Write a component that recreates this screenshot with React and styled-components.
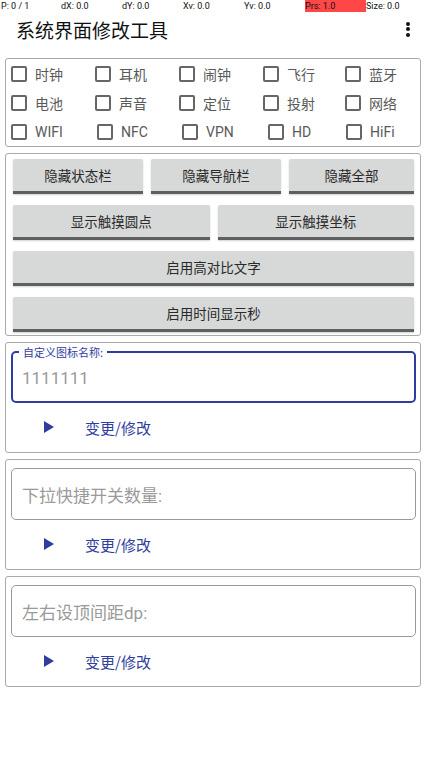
import React from 'react';
import styled, { createGlobalStyle } from 'styled-components';

const GlobalStyle = createGlobalStyle`
  body {
    margin: 0;
    background: #fff;
    font-family: Roboto, 'Noto Sans CJK SC', sans-serif;
  }
`;

const BLUE = '#2f3e9e';

const Page = styled.div`
  width: 427px;
  height: 760px;
  background: #fff;
  overflow: hidden;
`;

const StatusBar = styled.div`
  display: grid;
  grid-template-columns: repeat(7, 61px);
  height: 12px;
`;

const StatusCell = styled.div`
  font-size: 9px;
  line-height: 12px;
  color: #111;
  padding-left: ${({ first }) => (first ? '1px' : '0')};
  background: ${({ hot }) => (hot ? '#ff4747' : 'transparent')};
  white-space: nowrap;
`;

const Header = styled.div`
  display: flex;
  align-items: center;
  justify-content: space-between;
  height: 34px;
  padding: 0 17px 0 16px;
  margin-bottom: 12px;
`;

const Title = styled.h1`
  margin: 0;
  font-size: 19px;
  font-weight: 400;
  color: #111;
  font-family: 'Noto Sans CJK SC', sans-serif;
`;

const MenuDots = styled.div`
  display: flex;
  flex-direction: column;
  gap: 1.5px;
  span {
    width: 4px;
    height: 4px;
    border-radius: 50%;
    background: #111;
  }
`;

const Stack = styled.div`
  display: flex;
  flex-direction: column;
  gap: 6px;
  padding: 0 6px 0 5px;
`;

const Panel = styled.div`
  border: 1px solid #aaa;
  border-radius: 3px;
  padding: ${({ pad }) => pad || '0'};
`;

const CheckRow = styled.div`
  display: grid;
  grid-template-columns: ${({ cols }) => cols};
  height: 29px;
  align-items: center;
  padding-left: 5px;
`;

const CheckItem = styled.label`
  display: flex;
  align-items: center;
  gap: 8px;
  font-size: 14px;
  color: #595959;
  font-family: Roboto, 'Noto Sans CJK SC', sans-serif;
`;

const Box = styled.span`
  width: 12px;
  height: 12px;
  border: 2px solid #666;
  border-radius: 2px;
  flex: none;
`;

const ButtonGrid = styled.div`
  display: flex;
  flex-direction: column;
  gap: 11px;
  padding: 5px 6px 3px 7px;
`;

const ButtonRow = styled.div`
  display: grid;
  grid-template-columns: ${({ cols }) => cols};
  gap: 8px;
`;

const GrayButton = styled.button`
  height: 35px;
  border: none;
  border-bottom: 3px solid #5f5f5f;
  border-radius: 2px 2px 0 0;
  background: #d7d8d8;
  box-shadow: 0 1px 2px rgba(0, 0, 0, 0.18);
  font-family: 'Noto Sans CJK SC', sans-serif;
  font-size: 13.5px;
  color: #2a2a2a;
  padding: 0;
`;

const Field = styled.div`
  position: relative;
  height: 52px;
  box-sizing: border-box;
  margin: 0 4px 0 5px;
  border: ${({ focused }) => (focused ? `2px solid ${BLUE}` : '1px solid #999')};
  border-radius: 5px;
  display: flex;
  align-items: center;
  padding-left: ${({ focused }) => (focused ? '9px' : '10px')};
`;

const FieldLabel = styled.span`
  position: absolute;
  top: -8px;
  left: 6px;
  padding: 0 4px;
  background: #fff;
  font-size: 11px;
  line-height: 14px;
  color: ${BLUE};
  font-family: 'Noto Sans CJK SC', sans-serif;
`;

const FieldText = styled.span`
  font-size: 17px;
  color: #9a9a9a;
  font-family: Roboto, 'Noto Sans CJK SC', sans-serif;
  margin-top: ${({ focused }) => (focused ? '2px' : '0')};
`;

const ActionRow = styled.div`
  height: 48px;
  display: flex;
  align-items: center;
  padding-left: 38px;
  gap: 31px;
  color: ${BLUE};
  font-size: 15px;
  font-family: 'Noto Sans CJK SC', sans-serif;
`;

const checks = [
  { cols: '84px 84px 84px 82px 1fr', items: ['时钟', '耳机', '闹钟', '飞行', '蓝牙'] },
  { cols: '84px 84px 84px 82px 1fr', items: ['电池', '声音', '定位', '投射', '网络'] },
  { cols: '86px 85px 86px 78px 1fr', items: ['WIFI', 'NFC', 'VPN', 'HD', 'HiFi'] },
];

const stats = ['P: 0 / 1', 'dX: 0.0', 'dY: 0.0', 'Xv: 0.0', 'Yv: 0.0', 'Prs: 1.0', 'Size: 0.0'];

const fields = [
  { label: '自定义图标名称:', text: '1111111', focused: true },
  { text: '下拉快捷开关数量:' },
  { text: '左右设顶间距dp:' },
];

const Play = () => (
  <svg width="10" height="12" viewBox="0 0 10 12">
    <path d="M0 0 L10 6 L0 12 Z" fill={BLUE} />
  </svg>
);

export default function App() {
  return (
    <Page>
      <GlobalStyle />
      <StatusBar>
        {stats.map((s, i) => (
          <StatusCell key={s} first={i === 0} hot={i === 5}>{s}</StatusCell>
        ))}
      </StatusBar>
      <Header>
        <Title>系统界面修改工具</Title>
        <MenuDots><span /><span /><span /></MenuDots>
      </Header>
      <Stack>
        <Panel>
          {checks.map((row, r) => (
            <CheckRow key={r} cols={row.cols}>
              {row.items.map((c) => (
                <CheckItem key={c}><Box />{c}</CheckItem>
              ))}
            </CheckRow>
          ))}
        </Panel>
        <Panel>
          <ButtonGrid>
            <ButtonRow cols="130fr 130fr 125fr">
              <GrayButton>隐藏状态栏</GrayButton>
              <GrayButton>隐藏导航栏</GrayButton>
              <GrayButton>隐藏全部</GrayButton>
            </ButtonRow>
            <ButtonRow cols="1fr 1fr">
              <GrayButton>显示触摸圆点</GrayButton>
              <GrayButton>显示触摸坐标</GrayButton>
            </ButtonRow>
            <ButtonRow cols="1fr">
              <GrayButton>启用高对比文字</GrayButton>
            </ButtonRow>
            <ButtonRow cols="1fr">
              <GrayButton>启用时间显示秒</GrayButton>
            </ButtonRow>
          </ButtonGrid>
        </Panel>
        {fields.map((f) => (
          <Panel key={f.text} pad="8px 0 1px 0">
            <Field focused={f.focused}>
              {f.label && <FieldLabel>{f.label}</FieldLabel>}
              <FieldText focused={f.focused}>{f.text}</FieldText>
            </Field>
            <ActionRow>
              <Play />
              <span>变更/修改</span>
            </ActionRow>
          </Panel>
        ))}
      </Stack>
    </Page>
  );
}
